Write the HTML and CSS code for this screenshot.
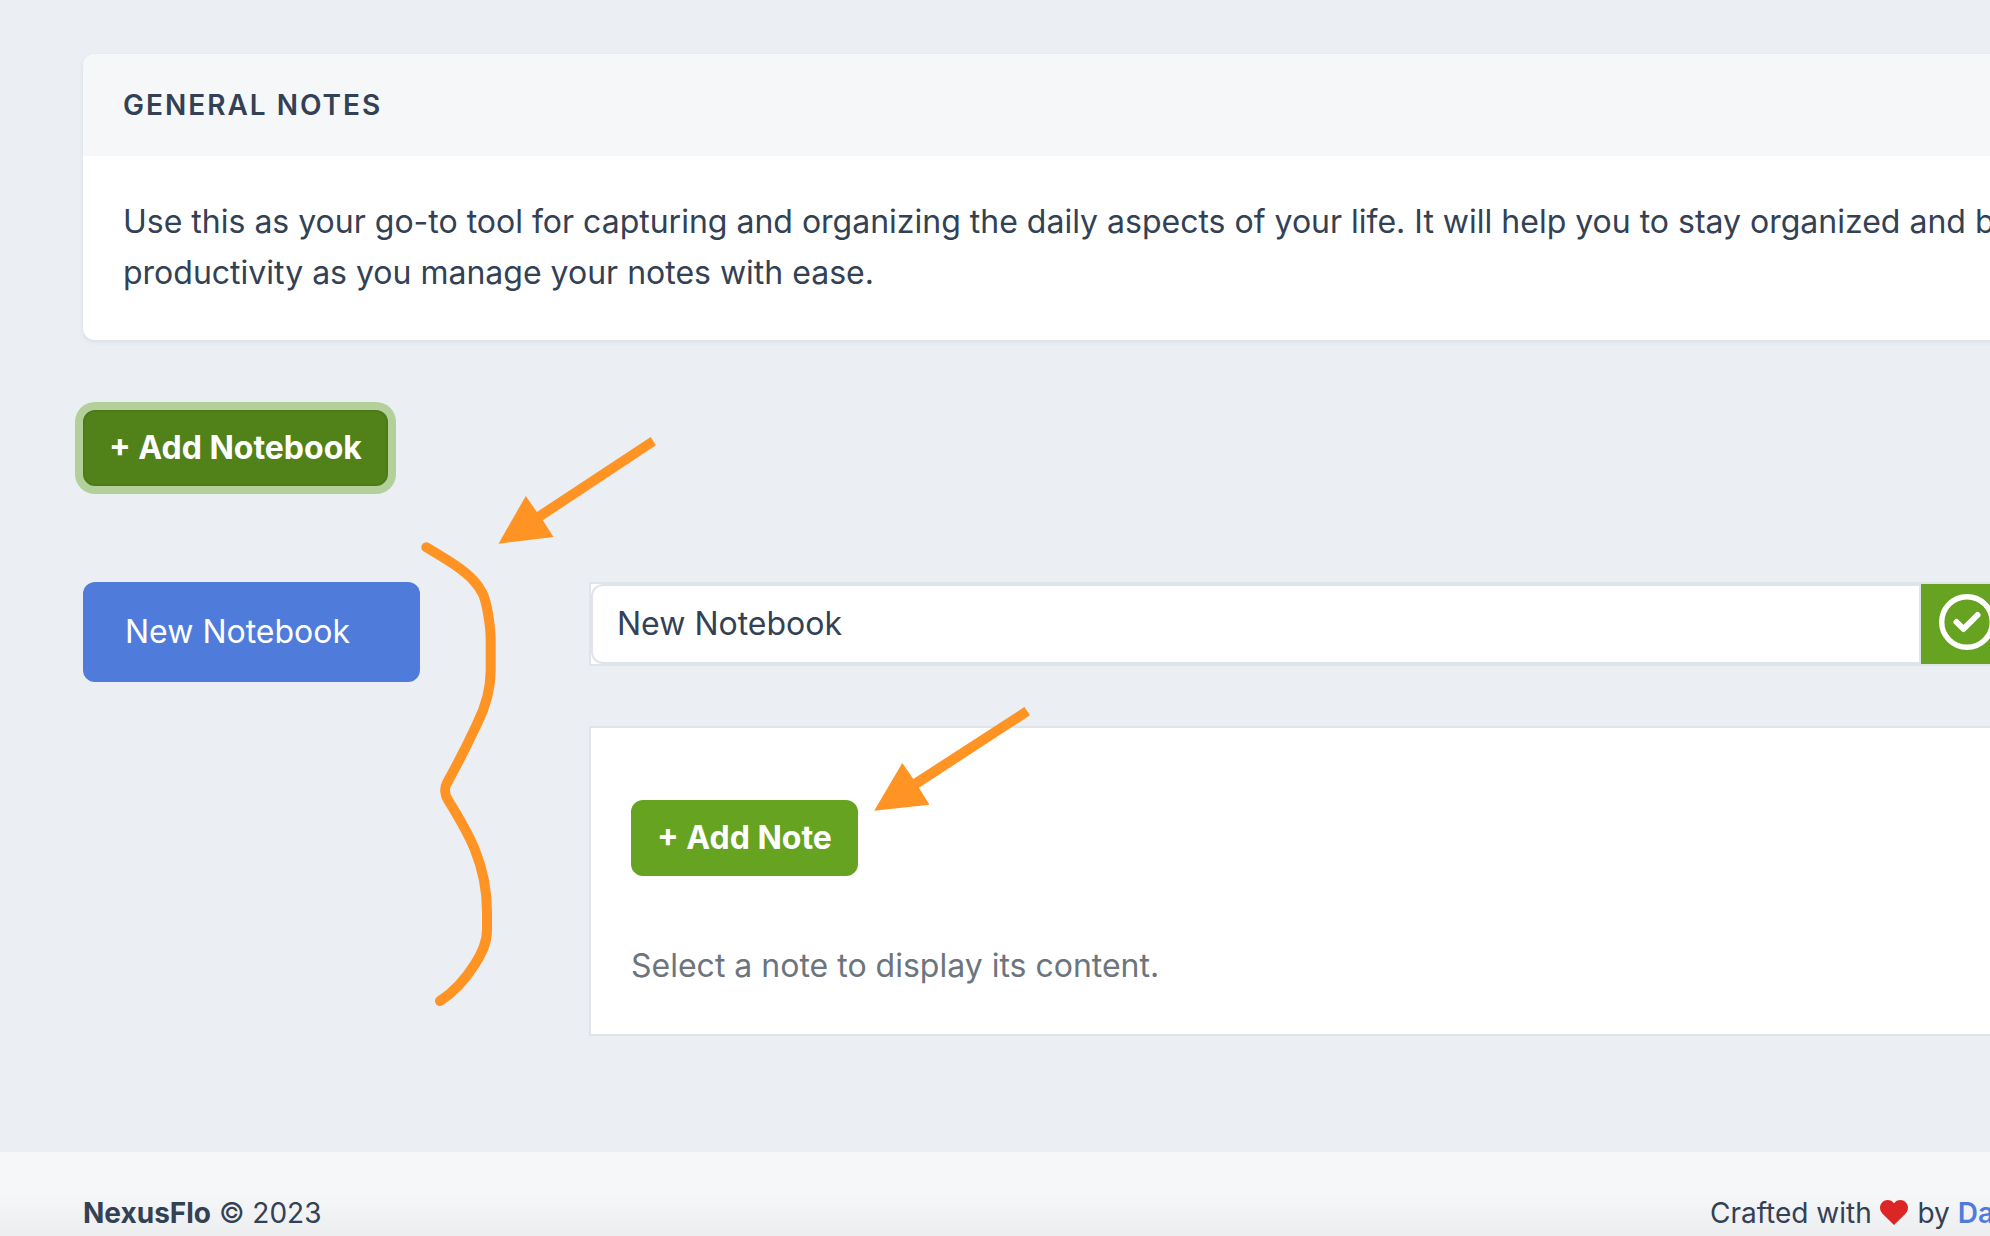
FILE: index.html
```html
<!DOCTYPE html>
<html lang="en">
<head>
<meta charset="utf-8">
<meta name="viewport" content="width=device-width, initial-scale=1">
<title>General Notes</title>
<link rel="stylesheet" href="styles.css">
</head>
<body>
<div class="page">
  <main class="content">
    <section class="block">
      <header class="block-header"><h1 class="block-title">General Notes</h1></header>
      <div class="block-content">
        <p>Use this as your go-to tool for capturing and organizing the daily aspects of your life. It will help you to stay organized and boost productivity as you manage your notes with ease.</p>
      </div>
    </section>

    <button type="button" class="btn btn-active">+ Add Notebook</button>

    <div class="workspace">
      <nav class="notebooks" aria-label="Notebooks">
        <a href="#notebook" class="notebook">New Notebook</a>
      </nav>
      <div class="notebook-pane" id="notebook">
        <form class="rename">
          <input class="rename-input" type="text" value="New Notebook" aria-label="Notebook name">
          <button type="button" class="rename-save" aria-label="Save name">
            <svg class="check-icon" viewBox="0 0 56 56" fill="none" stroke="#fff" stroke-linecap="round" stroke-linejoin="round" aria-hidden="true">
              <circle cx="28" cy="28" r="25.3" stroke-width="5.4"/>
              <path d="M17.500 28 24.500 35 38.500 21" stroke-width="6"/>
            </svg>
          </button>
        </form>
        <section class="note-panel">
          <button type="button" class="btn">+ Add Note</button>
          <p class="hint">Select a note to display its content.</p>
        </section>
      </div>
    </div>
  </main>

  <footer class="footer">
    <span><strong>NexusFlo</strong> © 2023</span>
    <span class="credit">Crafted with
      <svg class="heart" viewBox="0 0 28 25" aria-hidden="true"><path d="M14 25 2.300 13.400C-.8 10.200-.7 5.200 2.300 2.200 5.400-.8 10.300-.6 13.200 2.400L14 3.200l.8-.8C17.700-.6 22.600-.8 25.700 2.200c3 3 3.100 8 0 11.200Z" fill="#dc2626"/></svg>
      by <a href="#author">Da</a></span>
  </footer>

  <svg class="annotations" width="1100" height="1020" viewBox="0 0 1100 1020" fill="#ff9425" aria-hidden="true">
    <path d="M498.500 543.700 525.800 496 536.900 512 650.700 437 655.900 445.300 542.800 520.300 553.500 537Z"/>
    <path d="M874.200 810.700 902.300 763 913.300 779 1024.400 707 1030 715.300 918.900 787.700 929.500 804.700Z"/>
    <path d="M426.300 547.300C444 558 462 568 474 581C482 590 484.500 596 487 608C489.500 622 490.700 627 490.700 640V670C490.700 690 485 708 477 724Q463 754 447 783C444 788 445 795 448 800C468 832 487 864 487 912V930C487 943 482 953 475 964C465 980 454 992 440 1001" fill="none" stroke="#ff9425" stroke-width="10" stroke-linecap="round" stroke-linejoin="round"/>
  </svg>
</div>
</body>
</html>
```
FILE: styles.css
```css
* {
  box-sizing: border-box;
}

body {
  margin: 0;
  overflow-x: hidden;
  background: #ebeef3;
  color: #334155;
  font-family: Inter, "Liberation Sans", sans-serif;
  font-size: 32px;
  line-height: 51px;
}

/* The content area runs past the right edge of the window. */
.page {
  position: relative;
  width: calc(100% + 160px);
  min-height: 100vh;
  display: flex;
  flex-direction: column;
}

p,
h1 {
  margin: 0;
}

.content {
  flex: 1;
  padding: 54px 40px 116px 83px;
}

.block {
  margin-bottom: 70px;
  overflow: hidden;
  border-radius: 12px;
  background: #fff;
  box-shadow: 0 2px 4px #d9dfe5;
}

.block-header {
  padding: 28px 40px;
  background: #f6f7f9;
}

.block-title {
  font-size: 28px;
  font-weight: 600;
  line-height: 46px;
  letter-spacing: 2px;
  text-transform: uppercase;
}

.block-content {
  padding: 40px 40px 42px;
}

.btn {
  display: block;
  padding: 12px 24px;
  border: 2px solid #65a321;
  border-radius: 12px;
  background: #65a321;
  color: #fff;
  font: inherit;
  font-weight: 700;
  line-height: 48px;
}

.btn-active {
  border-color: #4c7a19;
  background: #51821a;
  box-shadow: 0 0 0 8px #b4d09a;
}

.workspace {
  display: grid;
  grid-template-columns: 337px 1fr;
  column-gap: 169px;
  margin-top: 96px;
}

.notebook {
  display: block;
  padding: 24px 42px;
  border-radius: 12px;
  background: #4f7bdb;
  color: #fff;
  line-height: 52px;
  text-decoration: none;
}

.rename {
  display: flex;
  height: 84px;
  margin-bottom: 60px;
  border: 2px solid #dfe3ea;
  background: #fff;
}

.rename-input {
  flex: 1;
  min-width: 0;
  padding: 0 24px 2px;
  border: 2px solid #dfe3ea;
  border-radius: 12px 0 0 12px;
  background: #fff;
  color: inherit;
  font: inherit;
}

.rename-save {
  display: flex;
  align-items: flex-start;
  width: 187px;
  padding: 10px 18px;
  border: 0;
  background: #65a321;
}

.check-icon {
  width: 56px;
  height: 56px;
}

.note-panel {
  padding: 72px 40px 43px;
  border: 2px solid #dfe3ea;
  background: #fff;
}

.hint {
  margin-top: 64px;
  color: #6c757d;
}

.footer {
  display: flex;
  justify-content: space-between;
  height: 84px;
  padding: 39px 156px 0 83px;
  background: linear-gradient(#f6f7f9 50%, #ecedef);
  font-size: 28px;
  line-height: 44px;
}

.footer a {
  color: #4f7bdb;
  font-weight: 600;
  text-decoration: none;
}

.heart {
  width: 28px;
  height: 25px;
  margin-right: 2px;
  vertical-align: -2px;
}

.annotations {
  position: absolute;
  top: 0;
  left: 0;
  pointer-events: none;
}
```
